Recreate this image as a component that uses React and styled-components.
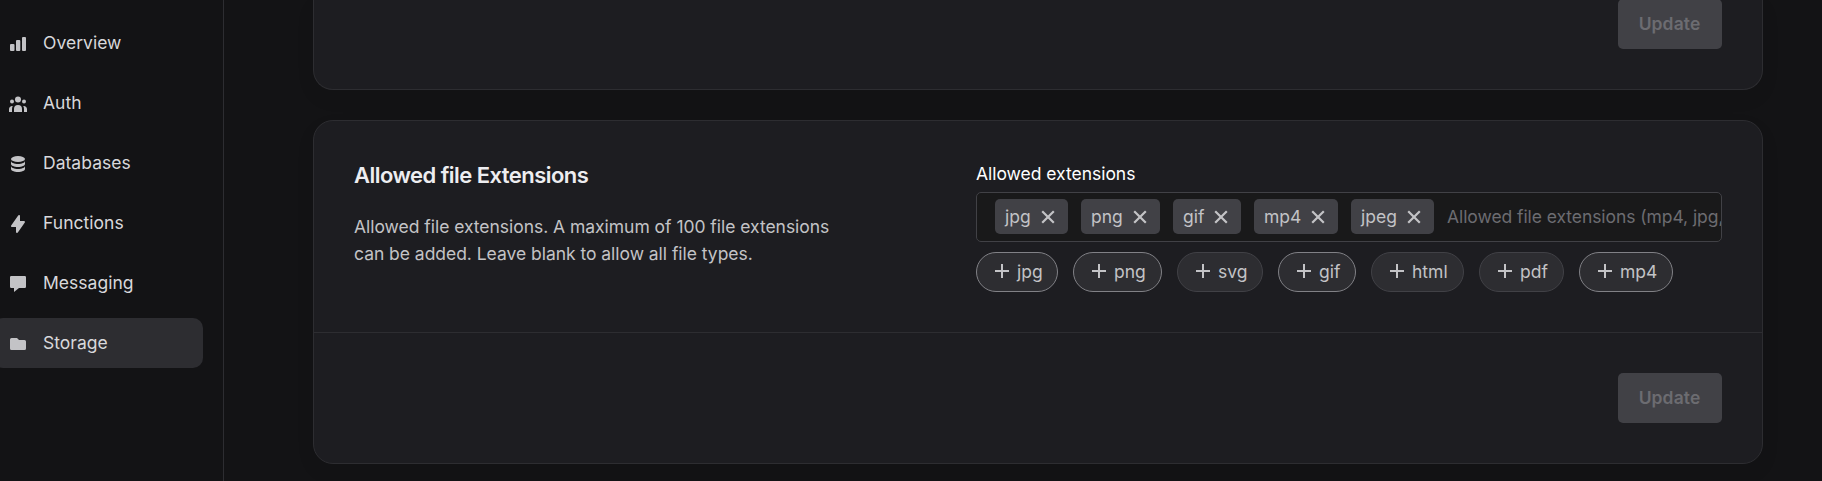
import React from "react";
import styled, { createGlobalStyle } from "styled-components";

const Global = createGlobalStyle`
  * { box-sizing: border-box; }
  body {
    margin: 0;
    background: #131315;
    font-family: Inter, "Liberation Sans", sans-serif;
    font-size: 17.5px;
    color: #c3c3c6;
    overflow: hidden;
  }
`;

const Shell = styled.div`
  display: flex;
  height: 481px;
  overflow: hidden;
`;

const Sidebar = styled.nav`
  flex: none;
  width: 224px;
  padding: 18px 20px 0 0;
  border-right: 1px solid #2d2d31;
  display: flex;
  flex-direction: column;
  gap: 10px;
`;

const NavItem = styled.a`
  display: flex;
  align-items: center;
  gap: 15px;
  height: 50px;
  margin-left: -7px;
  padding-left: 15px;
  border-radius: 10px;
  background: ${(p) => (p.$active ? "#2d2d31" : "transparent")};
  color: #d8d8db;
  line-height: 26px;
  letter-spacing: 0.03px;

  svg {
    width: 20px;
    height: 20px;
    margin-top: 2px;
    fill: #c3c3c6;
    flex: none;
  }
  span { margin-bottom: 1px; }
`;

const Main = styled.main`
  flex: 1;
  height: 481px;
  padding: 0 59px 0 89px;
  display: flex;
  flex-direction: column;
  gap: 30px;
`;

const Card = styled.section`
  flex: none;
  height: ${(p) => p.$height}px;
  border: 1px solid #2d2d31;
  border-top-width: ${(p) => (p.$tail ? 0 : 1)}px;
  border-radius: ${(p) => (p.$tail ? "0 0 20px 20px" : "20px")};
  background: #1d1d21;
  box-shadow: 0 8px 20px rgba(0, 0, 0, 0.06);
  display: flex;
  flex-direction: column;
`;

const CardBody = styled.div`
  display: grid;
  grid-template-columns: 622px 746px;
  height: 211px;
  padding: 40px 40px 0;
`;

const CardFooter = styled.footer`
  flex: 1;
  min-height: 0;
  display: flex;
  align-items: flex-end;
  justify-content: flex-end;
  padding: 0 40px 40px;
  border-top: ${(p) => (p.$divided ? "1px solid #2d2d31" : "none")};
`;

const UpdateButton = styled.button`
  width: 104px;
  height: 50px;
  padding: 0 1px 0 0;
  border: 0;
  border-radius: 5px;
  background: #414146;
  color: #6c6c71;
  font: 600 17.5px/26px Inter, "Liberation Sans", sans-serif;
  letter-spacing: 0.1px;
`;

const Title = styled.h2`
  margin: -1px 0 0;
  font-size: 22px;
  font-weight: 600;
  line-height: 30px;
  letter-spacing: -0.54px;
  color: #ededf0;
`;

const Description = styled.p`
  margin: 23px 0 0;
  width: 500px;
  line-height: 27px;
  letter-spacing: -0.035px;
`;

const Label = styled.label`
  display: block;
  margin-bottom: 5px;
  line-height: 26px;
  letter-spacing: -0.03px;
  color: #ffffff;
`;

const TagInput = styled.div`
  display: flex;
  align-items: center;
  gap: 13px;
  height: 50px;
  padding: 0 0 1px 18px;
  border: 1px solid #414146;
  border-radius: 5px;
  background: #19191a;
  overflow: hidden;
`;

const Tag = styled.span`
  flex: none;
  display: flex;
  align-items: center;
  justify-content: space-between;
  width: ${(p) => p.$width}px;
  height: 35px;
  padding: 0 13px 0 10px;
  border-radius: 5px;
  background: #414146;
  line-height: 26px;

  svg { width: 14px; height: 14px; margin-top: 1px; }
`;

const Placeholder = styled.span`
  white-space: nowrap;
  color: #6c6c71;
  letter-spacing: -0.07px;
`;

const Suggestions = styled.div`
  display: flex;
  gap: 15px;
  margin-top: 10px;
`;

const Pill = styled.button`
  display: flex;
  align-items: center;
  gap: 8px;
  width: ${(p) => p.$width}px;
  height: 40px;
  padding: 0 0 0 18px;
  border: 1px solid ${(p) => (p.$picked ? "#818186" : "#414146")};
  border-radius: 20px;
  background: #2d2d31;
  color: #c3c3c6;
  font: 400 17.5px/26px Inter, "Liberation Sans", sans-serif;

  svg { width: 14px; height: 14px; flex: none; margin-top: -2px; }
`;

const Stroke = styled.path`
  fill: none;
  stroke: currentColor;
  stroke-width: ${(p) => p.$weight || 2};
  stroke-linecap: butt;
`;

const Plus = () => (
  <svg viewBox="0 0 14 14"><Stroke d="M7 0V14M0 7H14" /></svg>
);
const Cross = () => (
  <svg viewBox="0 0 14 14"><Stroke $weight={2.2} d="M1.2 1.2 12.8 12.8M12.8 1.2 1.2 12.8" /></svg>
);

const icons = {
  Overview: (
    <>
      <rect x="2" y="10" width="4.5" height="7" rx="1" />
      <rect x="8" y="6" width="4.3" height="11" rx="1" />
      <rect x="14" y="3" width="4" height="14" rx="1" />
    </>
  ),
  Auth: (
    <>
      <circle cx="10" cy="5.5" r="3" />
      <circle cx="4" cy="7.5" r="2" />
      <circle cx="16" cy="7.5" r="2" />
      <path d="M6 18v-3a4 4 0 0 1 8 0v3zM1 18v-3a3 3 0 0 1 3.75-2.9A6 6 0 0 0 4 15v3zM16 18v-3c0-1.05-.27-2.05-.75-2.9A3 3 0 0 1 19 15v3z" />
    </>
  ),
  Databases: (
    <>
      <ellipse cx="10" cy="5" rx="7" ry="3" />
      <path d="M3 7c0 1.66 3.13 3 7 3s7-1.34 7-3v3c0 1.66-3.13 3-7 3s-7-1.34-7-3z" />
      <path d="M3 12c0 1.66 3.13 3 7 3s7-1.34 7-3v3c0 1.66-3.13 3-7 3s-7-1.34-7-3z" />
    </>
  ),
  Functions: (
    <path d="M11.3 1.05A1 1 0 0 1 12 2v5h4a1 1 0 0 1 .82 1.57l-7 10A1 1 0 0 1 8 18v-5H4a1 1 0 0 1-.82-1.57l7-10a1 1 0 0 1 1.12-.38z" />
  ),
  Messaging: (
    <path d="M3.2 2h13.6A1.2 1.2 0 0 1 18 3.2v9.6a1.2 1.2 0 0 1-1.2 1.2H11l-5 4v-4H3.2A1.2 1.2 0 0 1 2 12.8V3.2A1.2 1.2 0 0 1 3.2 2z" />
  ),
  Storage: (
    <path d="M2 5.5A1.5 1.5 0 0 1 3.5 4H9l2 2h5.5A1.5 1.5 0 0 1 18 7.5v7a1.5 1.5 0 0 1-1.5 1.5h-13A1.5 1.5 0 0 1 2 14.5z" />
  ),
};

const tags = [["jpg", 73], ["png", 79], ["gif", 68], ["mp4", 84], ["jpeg", 83]];
const pills = [
  ["jpg", 82, true],
  ["png", 89, true],
  ["svg", 86, false],
  ["gif", 78, true],
  ["html", 93, false],
  ["pdf", 85, false],
  ["mp4", 94, true],
];

export default function App() {
  return (
    <>
      <Global />
      <Shell>
        <Sidebar>
          {Object.entries(icons).map(([name, icon]) => (
            <NavItem key={name} $active={name === "Storage"}>
              <svg viewBox="0 0 20 20">{icon}</svg>
              <span>{name}</span>
            </NavItem>
          ))}
        </Sidebar>
        <Main>
          <Card $height={90} $tail>
            <CardFooter>
              <UpdateButton>Update</UpdateButton>
            </CardFooter>
          </Card>
          <Card $height={344}>
            <CardBody>
              <div>
                <Title>Allowed file Extensions</Title>
                <Description>
                  Allowed file extensions. A maximum of 100 file extensions can be added. Leave blank to allow all file types.
                </Description>
              </div>
              <div>
                <Label>Allowed extensions</Label>
                <TagInput>
                  {tags.map(([name, width]) => (
                    <Tag key={name} $width={width}>{name}<Cross /></Tag>
                  ))}
                  <Placeholder>Allowed file extensions (mp4, jpg, txt)</Placeholder>
                </TagInput>
                <Suggestions>
                  {pills.map(([name, width, picked]) => (
                    <Pill key={name} $width={width} $picked={picked}><Plus />{name}</Pill>
                  ))}
                </Suggestions>
              </div>
            </CardBody>
            <CardFooter $divided>
              <UpdateButton>Update</UpdateButton>
            </CardFooter>
          </Card>
        </Main>
      </Shell>
    </>
  );
}
